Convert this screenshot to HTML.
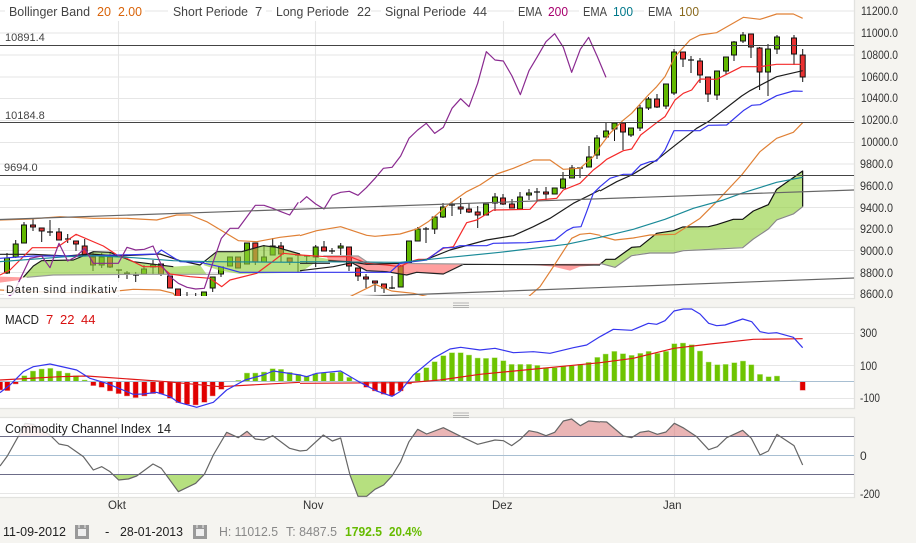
<!DOCTYPE html>
<html><head><meta charset="utf-8"><style>
html,body{margin:0;padding:0;background:#f5f4f0}
svg{display:block;font-family:"Liberation Sans",sans-serif}
text{font-size:13px;fill:#444}
.ax{font-size:12px;fill:#333}
.l{fill:none;stroke-width:3.6;stroke-linejoin:round}
.o{stroke:#e08035}.r{stroke:#f52a2a}.k{stroke:#1c1c1c}.b{stroke:#3535ee}.t{stroke:#1a8a98}.p{stroke:#8a2a90}
</style></head><body>
<svg width="916" height="543" viewBox="0 0 916 543" xmlns="http://www.w3.org/2000/svg">
<defs>
<clipPath id="m"><rect x="0" y="0" width="854" height="296"/></clipPath>
<clipPath id="ca"><rect x="0" y="417" width="854" height="19.5"/></clipPath>
<clipPath id="cb"><rect x="0" y="474" width="854" height="23"/></clipPath>
</defs>
<rect width="916" height="543" fill="#f5f4f0"/>
<!-- panels -->
<rect x="0" y="0" width="854" height="298" fill="#fff"/>
<rect x="0" y="307.5" width="854" height="101" fill="#fff"/>
<rect x="0" y="417" width="854" height="80" fill="#fff"/>
<path d="M0 11H854M0 33H854M0 55H854M0 77H854M0 98.500H854M0 120.500H854M0 142.500H854M0 164H854M0 185.500H854M0 207.500H854M0 229H854M0 250.500H854M0 272.500H854M0 294.500H854M118.500 21V297M315.500 21V297M503.500 21V297M674.500 21V297M118.500 308V408M315.500 308V408M503.500 308V408M674.500 308V408M118.500 417V497M315.500 417V497M503.500 417V497M674.500 417V497M0 333.500H854M0 365.500H854M0 398.500H854M0 493.500H854" stroke="#e6e6e6" stroke-width="1.100" fill="none"/>
<path d="M0 298.500H854.500V0M0 307.500H854.500V408.500H0M0 417.500H854.500V497.500H0" stroke="#e2e2df" stroke-width="1.300" fill="none"/>
<path d="M453 303H469M453 305.500H469M453 307.500H469M453 413H469M453 415.500H469M453 417.500H469" stroke="#a0a0a0" stroke-width=".8" fill="none"/>

<g clip-path="url(#m)">
<!-- wicks -->
<path stroke="#111" stroke-width="1" fill="none" d="M7 253V274M15.700 240V258M24 222V243M33 219V231M41.700 228V242M50 220V236M59 228V240M67.700 234V243M76 241V251M84.700 239V255M93 252V271M101.700 253V268M110 252V268M118.700 270V278M127 271V279M135.700 272V282M144 265V274M153 260V274M161 264V276M170 276V288M178 289V298M187 292V298M195.700 293V298M204 292V298M212.700 277V292M221 267V277M230 257V266M238 257V268M247 243V264M255.300 243V265M264 245V262M272.700 238V255M281 242V262M289.700 258V265M298 255V272M306.700 256V263M315.700 245V267M324 241V251M332 248V254M340.700 243V255M349 247V271M358 268V281M366 274V288M375 281V292M384 284V293M392 276V289M400.700 265V287M409 241V263M417.700 227V241M426 227V243M434.700 217V234M443 203V218M452 202V216M460.700 198V214M469 203V213M477.700 206V228M486 204V215M495 193V211M503 194V205M512 199V208M520 192V209M529 189V200M537 188V201M546 187V200M554.700 188V194M563 172V189M572 165V178M580 168V178M589 146V167M597 135V159M606 122V137M614.500 123V141M623 123V150M631 128V137M640 105V131M648.500 97V110M657 94V108M666 84V109M674 49V95M683 52V67M691 56V73M700 58V83M708 77V102M717 71V100M726 57V75M734 41V61M743 32V43M751 34V58M759.600 47V90M768 44V96M777 35V54M794 35V65M802.700 49V82"/>
<!-- dojis -->
<path stroke="#111" stroke-width="1.300" fill="none" d="M47 232h6M65 239h6M116 270h6M133 275h6M184 297h6M193 298h6M295 255h6M304 256h6M329 251h6M389 288h6M423 229h6M449 205h6M534 192h6M577 168h6M688 60h6"/>
<!-- green bodies -->
<path fill="#62b800" stroke="#111" stroke-width="1" d="M4.500 258h5v15h-5zM13.200 244h5v13h-5zM21.500 225h5v18h-5zM99.200 257h5v8h-5zM141.500 269h5v5h-5zM150.500 265h5v2h-5zM201.500 292h5v8h-5zM210.200 277h5v11h-5zM218.500 267h5v7h-5zM227.500 257h5v9h-5zM244.500 243h5v21h-5zM261.500 257h5v5h-5zM270.200 246h5v9h-5zM313.200 247h5v10h-5zM338.200 246h5v2h-5zM398.200 266h5v21h-5zM406.500 241h5v22h-5zM415.200 229h5v12h-5zM432.200 217h5v12h-5zM440.500 207h5v10h-5zM483.500 204h5v11h-5zM492.500 197h5v6h-5zM517.500 197h5v12h-5zM526.500 193h5v2h-5zM552.200 188h5v6h-5zM560.500 179h5v9h-5zM569.500 168h5v10h-5zM586.500 157h5v10h-5zM594.500 138h5v17h-5zM603.500 131h5v6h-5zM612 123h5v6h-5zM628.500 128h5v7h-5zM637.500 108h5v20h-5zM646 99h5v9h-5zM663.500 84h5v22h-5zM671.500 52h5v41h-5zM714.500 71h5v24h-5zM723.500 57h5v14h-5zM731.500 42h5v13h-5zM740.500 35h5v6h-5zM765.500 49h5v23h-5zM774.500 37h5v12h-5z"/>
<!-- red bodies -->
<path fill="#e83232" stroke="#111" stroke-width="1" d="M30.500 225h5v2h-5zM39.200 228h5v3h-5zM56.500 232h5v8h-5zM73.500 241h5v3h-5zM82.200 246h5v9h-5zM90.500 257h5v8h-5zM107.500 257h5v10h-5zM124.500 273h5v1h-5zM158.500 264h5v10h-5zM167.500 276h5v12h-5zM175.500 289h5v11h-5zM235.500 257h5v11h-5zM252.800 243h5v19h-5zM278.500 246h5v8h-5zM287.200 258h5v4h-5zM321.500 247h5v4h-5zM346.500 247h5v19h-5zM355.500 268h5v8h-5zM363.500 277h5v2h-5zM372.500 281h5v2h-5zM381.500 284h5v4h-5zM458.200 207h5v2h-5zM466.500 209h5v3h-5zM475.200 212h5v3h-5zM500.500 198h5v6h-5zM509.500 204h5v4h-5zM543.500 192h5v2h-5zM620.500 123h5v9h-5zM654.500 99h5v8h-5zM680.500 52h5v7h-5zM697.500 61h5v14h-5zM705.500 77h5v17h-5zM748.500 34h5v13h-5zM757.100 48h5v24h-5zM791.500 38h5v16h-5zM800.200 55h5v22h-5z"/>

<!-- clouds -->
<g transform="scale(.33333)">
<polygon fill="#8fcf3a" fill-opacity=".62" points="70,832 100,798 125,782 220,780 280,755 330,757 400,785 520,800 600,795 620,823 400,823 160,825 80,832"/>
<polygon fill="#8fcf3a" fill-opacity=".62" points="610,795 650,755 725,755 790,737 830,742 900,762 975,775 1015,782 950,785 900,818 720,822 660,812"/>
<polygon fill="#ff5050" fill-opacity=".55" points="0,830 70,832 60,840 0,848"/>
</g>
<g transform="translate(300 0) scale(.33333)">
<polygon fill="#ff5050" fill-opacity=".55" points="80,768 175,768 200,785 250,790 330,790 490,792 430,822 350,817 320,825 260,815 200,812 150,785 85,782"/>
<polygon fill="#ff5050" fill-opacity=".55" points="550,793 900,791 900,795 840,800 810,812 760,800 700,795"/>
<path d="M0 790H90M85 782L150 785L200 812L260 815L320 825L350 817L430 822L490 793L900 795" class="l" stroke="#222" stroke-width="3.600"/>
<path d="M70 768H175L200 785L250 790L490 792" class="l" stroke="#999"/>
</g>
<g transform="translate(600 0) scale(.33333)">
<polygon fill="#8fcf3a" fill-opacity=".62" points="0,793 18,778 45,778 95,742 120,740 170,700 220,692 248,681 325,680 350,674 400,658 428,658 460,633 505,614 530,568 608,513 608,620 580,640 530,658 505,685 460,715 428,741 350,745 250,750 220,757 150,757 95,765 45,800 0,790"/>
<polyline class="l" stroke="#111" stroke-width="4" points="0,793 18,778 45,778 95,742 120,740 170,700 220,692 248,681 325,680 350,674 400,658 428,658 460,633 505,614 530,568 608,513 608,620"/>
<polyline class="l" stroke="#888" stroke-width="4" points="608,620 580,642 530,660 505,687 460,717 428,743 350,747 250,752 220,759 150,759 95,767 45,802 0,790"/>
</g>

<!-- zoom 1 lines -->
<g transform="scale(.33333)">
<polyline class="l" stroke="#999" points="80,832 160,825 400,823 660,823"/>
<polyline class="l k" points="70,832 100,798 125,782 220,780 280,755 330,757 400,785 520,800"/>
<polyline class="l k" points="0,763 100,763 200,768 270,762 355,768 480,762 540,782 600,795 650,755 725,755 790,737 830,742 900,762"/>
<polyline class="l o" points="0,660 90,657 180,650 280,655 380,655 470,660 530,645 570,645 620,665 715,722 770,725 840,712 900,705"/>
<polyline class="l o" points="0,870 100,875 280,880 400,868 480,870 520,880 530,895"/>
<polyline class="l r" points="0,825 30,810 97,743 170,743 228,703 310,738 356,768 380,775 430,800 484,800 510,822 570,830 630,835 665,860 690,840 770,820 820,783 850,760 900,765"/>
<polyline class="l b" points="0,775 100,768 250,768 470,762 484,750 540,785 600,787 660,800 720,817 900,817"/>
<polyline class="l t" points="0,785 200,770 280,767 400,773 520,782 640,785 900,787"/>
<polyline class="l p" points="0,905 40,880 90,775 125,768 150,803 177,730 203,783 228,770 254,745 280,790 355,790 381,742 407,750 433,748 459,738 484,795 510,830 535,850 561,862 587,867 613,865 638,790 664,715 690,685 715,685 741,650 766,616 792,616 818,625 843,635 869,645 895,607"/>
</g>
<!-- zoom 2 lines -->
<g transform="translate(300 0) scale(.33333)">
<polyline class="l o" points="0,707 50,692 122,680 200,706 225,709 300,702 350,687 385,665 450,610 500,575 540,555 590,522 640,505 700,480 750,480 790,508 840,505 880,470 900,442"/>
<polyline class="l o" points="150,890 225,853 275,873 340,880 405,895"/>
<polyline class="l o" points="680,895 720,860 760,800 815,715 840,703 870,700 900,706"/>
<polyline class="l r" points="0,765 80,770 150,770 200,790 260,795 300,800 330,785 355,778 380,778 430,745 460,740 500,668 530,660 580,630 690,628 715,600 770,595 790,570 840,550 880,510 900,495"/>
<polyline class="l k" points="0,812 100,800 160,787 200,793 300,790 380,778 450,750 560,720 640,707 700,680 750,655 820,610 900,570"/>
<polyline class="l b" points="0,817 270,817 300,790 380,780 430,743 460,743 480,737 560,737 580,730 680,728 765,720 800,692 820,682 843,680 860,635 880,580 900,560"/>
<polyline class="l t" points="0,785 300,787 420,775 600,757 800,733 900,712"/>
<polyline class="l p" points="0,608 20,590 47,612 72,627 97,586 122,577 148,574 174,586 199,563 225,535 250,505 276,502 302,468 327,415 353,390 379,370 404,400 430,382 456,325 482,296 507,320 533,250 559,155 585,180 610,183 636,228 661,284 687,212 712,170 738,125 764,101 790,142 815,217 841,148 866,112 892,170 918,232"/>
</g>
<!-- zoom 3 lines -->
<g transform="translate(600 0) scale(.33333)">
<polyline class="l o" points="0,440 30,400 68,362 95,340 145,285 170,260 195,230 225,170 270,120 300,105 350,98 430,52 480,58 530,42 580,42 608,55"/>
<polyline class="l o" points="0,708 45,720 100,714 150,705 225,703 300,655 345,610 425,525 480,455 530,415 580,397 608,368"/>
<polyline class="l r" points="0,495 20,478 70,452 95,447 122,405 170,368 195,350 225,300 250,280 275,270 300,237 350,238 425,200 480,200 530,193 608,193"/>
<polyline class="l k" points="0,573 50,545 95,525 170,480 195,460 290,385 325,365 425,288 450,272 530,230 608,212"/>
<polyline class="l b" points="0,560 30,535 70,523 95,523 122,495 150,485 170,483 195,450 222,392 300,392 325,376 380,375 430,332 455,316 480,314 530,287 580,273 608,274"/>
<polyline class="l t" points="0,712 100,688 195,658 280,625 370,600 430,578 530,547 608,532"/>
</g>
<!-- level lines + trendlines -->
<path d="M0 45.500H854M0 122.500H854M0 175.500H854" stroke="#444" stroke-width="1.100" fill="none"/>
<path d="M0 219.500L854 190" stroke="#666" stroke-width="1.200" fill="none"/>
<path d="M322 298L854 278" stroke="#666" stroke-width="1.200" fill="none"/>
</g>

<!-- legend top -->
<rect x="5" y="3" width="140" height="18" fill="#fff"/>
<rect x="168" y="3" width="98" height="18" fill="#fff"/>
<rect x="272" y="3" width="99" height="18" fill="#fff"/>
<rect x="381" y="3" width="106" height="18" fill="#fff"/>
<rect x="514" y="3" width="52" height="18" fill="#fff"/>
<rect x="579" y="3" width="52" height="18" fill="#fff"/>
<rect x="644" y="3" width="52" height="18" fill="#fff"/>
<text x="9" y="16" textLength="81" lengthAdjust="spacingAndGlyphs">Bollinger Band</text>
<text x="97" y="16" style="fill:#d9640a" textLength="14" lengthAdjust="spacingAndGlyphs">20</text>
<text x="118" y="16" style="fill:#d9640a" textLength="24" lengthAdjust="spacingAndGlyphs">2.00</text>
<text x="173" y="16" textLength="75" lengthAdjust="spacingAndGlyphs">Short Periode</text>
<text x="255" y="16">7</text>
<text x="276" y="16" textLength="73" lengthAdjust="spacingAndGlyphs">Long Periode</text>
<text x="357" y="16" textLength="14" lengthAdjust="spacingAndGlyphs">22</text>
<text x="385" y="16" textLength="81" lengthAdjust="spacingAndGlyphs">Signal Periode</text>
<text x="473" y="16" textLength="14" lengthAdjust="spacingAndGlyphs">44</text>
<text x="518" y="16" textLength="24" lengthAdjust="spacingAndGlyphs">EMA</text>
<text x="548" y="16" style="fill:#a8006e" textLength="20" lengthAdjust="spacingAndGlyphs">200</text>
<text x="583" y="16" textLength="24" lengthAdjust="spacingAndGlyphs">EMA</text>
<text x="613" y="16" style="fill:#00788a" textLength="20" lengthAdjust="spacingAndGlyphs">100</text>
<text x="648" y="16" textLength="24" lengthAdjust="spacingAndGlyphs">EMA</text>
<text x="679" y="16" style="fill:#8a6a1e" textLength="20" lengthAdjust="spacingAndGlyphs">100</text>

<text x="5" y="41" style="font-size:11px">10891.4</text>
<text x="5" y="119" style="font-size:11px">10184.8</text>
<text x="4" y="171" style="font-size:11px">9694.0</text>

<rect x="4" y="282" width="116" height="13" fill="#fff" fill-opacity=".8"/>
<text x="6" y="293" style="font-size:11px;fill:#222" textLength="111">Daten sind indikativ</text>

<!-- axis -->
<g>
<text class="ax" x="861" y="15" textLength="37" lengthAdjust="spacingAndGlyphs">11200.0</text>
<text class="ax" x="861" y="37" textLength="37" lengthAdjust="spacingAndGlyphs">11000.0</text>
<text class="ax" x="861" y="59" textLength="37" lengthAdjust="spacingAndGlyphs">10800.0</text>
<text class="ax" x="861" y="81" textLength="37" lengthAdjust="spacingAndGlyphs">10600.0</text>
<text class="ax" x="861" y="102" textLength="37" lengthAdjust="spacingAndGlyphs">10400.0</text>
<text class="ax" x="861" y="124" textLength="37" lengthAdjust="spacingAndGlyphs">10200.0</text>
<text class="ax" x="861" y="146" textLength="37" lengthAdjust="spacingAndGlyphs">10000.0</text>
<text class="ax" x="860" y="168" textLength="33" lengthAdjust="spacingAndGlyphs">9800.0</text>
<text class="ax" x="860" y="190" textLength="33" lengthAdjust="spacingAndGlyphs">9600.0</text>
<text class="ax" x="860" y="212" textLength="33" lengthAdjust="spacingAndGlyphs">9400.0</text>
<text class="ax" x="860" y="233" textLength="33" lengthAdjust="spacingAndGlyphs">9200.0</text>
<text class="ax" x="860" y="255" textLength="33" lengthAdjust="spacingAndGlyphs">9000.0</text>
<text class="ax" x="860" y="277" textLength="33" lengthAdjust="spacingAndGlyphs">8800.0</text>
<text class="ax" x="860" y="298" textLength="33" lengthAdjust="spacingAndGlyphs">8600.0</text>
<text class="ax" x="860" y="337" textLength="17" lengthAdjust="spacingAndGlyphs">300</text>
<text class="ax" x="860" y="370" textLength="17" lengthAdjust="spacingAndGlyphs">100</text>
<text class="ax" x="860" y="402" textLength="20" lengthAdjust="spacingAndGlyphs">-100</text>
<text class="ax" x="860" y="460">0</text>
<text class="ax" x="860" y="498" textLength="20" lengthAdjust="spacingAndGlyphs">-200</text>
</g>

<!-- MACD bars -->
<g transform="translate(0 295) scale(.33333)">
<path fill="#e00000" stroke="#f09a9a" stroke-width="1.500" d="M-8 260h16v25h-16zM14 260h16v27h-16zM39 260h16v7h-16zM272 260h16v12h-16zM297 260h16v17h-16zM322 260h16v28h-16zM348 260h16v36h-16zM373 260h16v43h-16zM399 260h16v48h-16zM425 260h16v43h-16zM451 260h16v36h-16zM476 260h16v37h-16zM502 260h16v50h-16zM527 260h16v63h-16zM553 260h16v68h-16zM579 260h16v70h-16zM605 260h16v62h-16zM630 260h16v43h-16zM656 260h16v23h-16z"/>
<path fill="#6ec400" stroke="#c4e89a" stroke-width="1.500" d="M65 242h16v18h-16zM91 228h16v32h-16zM117 222h16v38h-16zM143 220h16v40h-16zM169 228h16v32h-16zM195 234h16v26h-16zM220 242h16v18h-16zM246 255h16v5h-16zM707 256h16v4h-16zM733 234h16v26h-16zM758 234h16v26h-16zM784 231h16v29h-16zM810 221h16v39h-16zM835 223h16v37h-16zM861 232h16v28h-16zM887 238h16v22h-16z"/>
</g>
<g transform="translate(300 295) scale(.33333)">
<path fill="#6ec400" stroke="#c4e89a" stroke-width="1.500" d="M12 243h16v17h-16zM38 236h16v24h-16zM63 233h16v27h-16zM89 233h16v27h-16zM114 231h16v29h-16zM140 247h16v13h-16zM166 258h16v2h-16zM345 234h16v26h-16zM371 218h16v42h-16zM396 200h16v60h-16zM422 182h16v78h-16zM448 173h16v87h-16zM474 173h16v87h-16zM499 180h16v80h-16zM525 189h16v71h-16zM550 190h16v70h-16zM576 188h16v72h-16zM602 197h16v63h-16zM627 208h16v52h-16zM653 208h16v52h-16zM679 208h16v52h-16zM704 211h16v49h-16zM730 218h16v42h-16zM756 218h16v42h-16zM782 214h16v46h-16zM807 212h16v48h-16zM833 208h16v52h-16zM858 202h16v58h-16zM884 187h16v73h-16z"/>
<path fill="#e00000" stroke="#f09a9a" stroke-width="1.500" d="M191 260h16v17h-16zM217 260h16v28h-16zM243 260h16v38h-16zM268 260h16v42h-16zM294 260h16v28h-16zM319 260h16v7h-16z"/>
</g>
<g transform="translate(600 295) scale(.33333)">
<path fill="#6ec400" stroke="#c4e89a" stroke-width="1.500" d="M9 177h16v83h-16zM35 169h16v91h-16zM61 176h16v84h-16zM87 181h16v79h-16zM113 175h16v85h-16zM138 169h16v91h-16zM164 175h16v85h-16zM190 169h16v91h-16zM215 146h16v114h-16zM241 144h16v116h-16zM267 149h16v111h-16zM292 168h16v92h-16zM318 201h16v59h-16zM344 209h16v51h-16zM369 208h16v52h-16zM395 203h16v57h-16zM421 198h16v62h-16zM446 209h16v51h-16zM472 238h16v22h-16zM498 245h16v15h-16zM523 243h16v17h-16zM574 258h16v2h-16z"/>
<path fill="#e00000" stroke="#f09a9a" stroke-width="1.500" d="M600 260h16v26h-16z"/>
</g>
<path d="M0 381.500H854" stroke="#a8bfd2" stroke-width="1.100" fill="none"/>
<!-- MACD lines -->
<g transform="translate(0 295) scale(.33333)">
<polyline class="l" stroke="#e01818" points="0,255 180,245 260,243 500,260 660,275 900,262"/>
<polyline class="l b" points="0,293 30,270 70,230 100,215 150,207 230,225 270,250 320,265 400,298 430,297 470,292 510,305 535,322 590,337 640,322 680,285 735,255 790,240 820,228 900,240"/>
</g>
<g transform="translate(300 295) scale(.33333)">
<polyline class="l" stroke="#e01818" points="0,265 325,263 420,255 540,238 900,203"/>
<polyline class="l b" points="0,240 20,245 50,235 122,228 180,262 230,288 276,304 300,290 340,240 400,190 450,162 482,157 540,165 585,160 640,173 700,170 750,175 820,158 860,150 900,125"/>
</g>
<g transform="translate(600 295) scale(.33333)">
<polyline class="l" stroke="#e01818" points="0,203 100,190 222,160 330,147 460,133 608,131"/>
<polyline class="l b" points="0,125 40,103 95,106 145,85 170,88 195,77 222,48 250,42 275,42 300,57 326,85 350,92 375,90 428,72 455,80 480,110 505,115 530,113 580,127 608,158"/>
</g>
<text x="5" y="324" style="fill:#222" textLength="34" lengthAdjust="spacingAndGlyphs">MACD</text>
<text x="46" y="324" style="fill:#d81010">7</text>
<text x="60" y="324" style="fill:#d81010">22</text>
<text x="81" y="324" style="fill:#d81010">44</text>

<!-- CCI fills -->
<g clip-path="url(#ca)"><g fill="#d87878" fill-opacity=".55">
<polygon transform="translate(0 295) scale(.33333)" points="0,513 22,483 60,415 75,385 100,388 150,420 177,447 203,452 250,485 280,525 305,515 330,530 356,555 385,552 410,543 459,507 484,520 535,590 587,565 613,538 640,480 680,412 715,428 741,409 766,432 792,435 818,422 869,460 900,468 900,424 0,424"/>
<polygon transform="translate(300 295) scale(.33333)" points="0,468 20,466 70,420 97,438 122,429 150,540 174,604 200,604 225,583 251,570 276,543 302,500 327,440 353,403 380,417 430,398 482,424 533,448 585,435 610,437 635,452 661,433 687,407 712,412 738,422 764,412 790,378 815,372 841,392 866,378 900,381 900,424 0,424"/>
<polygon transform="translate(600 295) scale(.33333)" points="0,380 20,381 70,423 95,428 120,412 146,408 172,418 198,411 223,385 249,398 290,425 326,464 352,455 380,428 428,406 454,430 480,480 505,468 531,418 582,452 608,510 608,424 0,424"/>
</g></g>
<g clip-path="url(#cb)"><g fill="#8fcf3a" fill-opacity=".65">
<polygon transform="translate(0 295) scale(.33333)" points="0,513 22,483 60,415 75,385 100,388 150,420 177,447 203,452 250,485 280,525 305,515 330,530 356,555 385,552 410,543 459,507 484,520 535,590 587,565 613,538 640,480 680,412 715,428 741,409 766,432 792,435 818,422 869,460 900,468 900,538 0,538"/>
<polygon transform="translate(300 295) scale(.33333)" points="0,468 20,466 70,420 97,438 122,429 150,540 174,604 200,604 225,583 251,570 276,543 302,500 327,440 353,403 380,417 430,398 482,424 900,424 900,538 0,538"/>
</g></g>
<path d="M0 436.500H854M0 474.500H854" stroke="#6c6c88" stroke-width="1.100" fill="none"/>
<path d="M0 455.500H854" stroke="#a8bfd2" stroke-width="1.100" fill="none"/>
<!-- CCI line -->
<g transform="translate(0 295) scale(.33333)"><polyline class="l" stroke="#666" points="0,513 22,483 60,415 75,385 100,388 150,420 177,447 203,452 250,485 280,525 305,515 330,530 356,555 385,552 410,543 459,507 484,520 535,590 587,565 613,538 640,480 680,412 715,428 741,409 766,432 792,435 818,422 869,460 900,468"/></g>
<g transform="translate(300 295) scale(.33333)"><polyline class="l" stroke="#666" points="0,468 20,466 70,420 97,438 122,429 150,540 174,604 200,604 225,583 251,570 276,543 302,500 327,440 353,403 380,417 430,398 482,424 533,448 585,435 610,437 635,452 661,433 687,407 712,412 738,422 764,412 790,378 815,372 841,392 866,378 900,381"/></g>
<g transform="translate(600 295) scale(.33333)"><polyline class="l" stroke="#666" points="0,380 20,381 70,423 95,428 120,412 146,408 172,418 198,411 223,385 249,398 290,425 326,464 352,455 380,428 428,406 454,430 480,480 505,468 531,418 582,452 608,510"/></g>
<rect x="3" y="419" width="172" height="17" fill="#fff" fill-opacity=".8"/>
<text x="5" y="433" style="fill:#222" textLength="146" lengthAdjust="spacingAndGlyphs">Commodity Channel Index</text>
<text x="157" y="433" style="fill:#222" textLength="14" lengthAdjust="spacingAndGlyphs">14</text>

<!-- months -->
<text x="108" y="509" style="font-size:11.5px;fill:#333">Okt</text>
<text x="303" y="509" style="font-size:11.5px;fill:#333">Nov</text>
<text x="492" y="509" style="font-size:11.5px;fill:#333">Dez</text>
<text x="663" y="509" style="font-size:11.5px;fill:#333">Jan</text>

<!-- footer -->
<text x="3" y="536" style="fill:#222" textLength="63" lengthAdjust="spacingAndGlyphs">11-09-2012</text>
<rect x="75" y="525" width="14" height="14" fill="#999"/>
<rect x="78" y="529" width="8" height="7" fill="#eee"/><path d="M79 525v3M85 525v3" stroke="#eee"/>
<text x="105" y="536" style="fill:#222">-</text>
<text x="120" y="536" style="fill:#222" textLength="63" lengthAdjust="spacingAndGlyphs">28-01-2013</text>
<rect x="193" y="525" width="14" height="14" fill="#999"/>
<rect x="196" y="529" width="8" height="7" fill="#eee"/><path d="M197 525v3M203 525v3" stroke="#eee"/>
<text x="219" y="536" style="fill:#888" textLength="59" lengthAdjust="spacingAndGlyphs">H: 11012.5</text>
<text x="286" y="536" style="fill:#888" textLength="51" lengthAdjust="spacingAndGlyphs">T: 8487.5</text>
<text x="345" y="536" style="fill:#66bb00;font-weight:bold" textLength="37" lengthAdjust="spacingAndGlyphs">1792.5</text>
<text x="389" y="536" style="fill:#66bb00;font-weight:bold" textLength="33" lengthAdjust="spacingAndGlyphs">20.4%</text>
</svg>
</body></html>
